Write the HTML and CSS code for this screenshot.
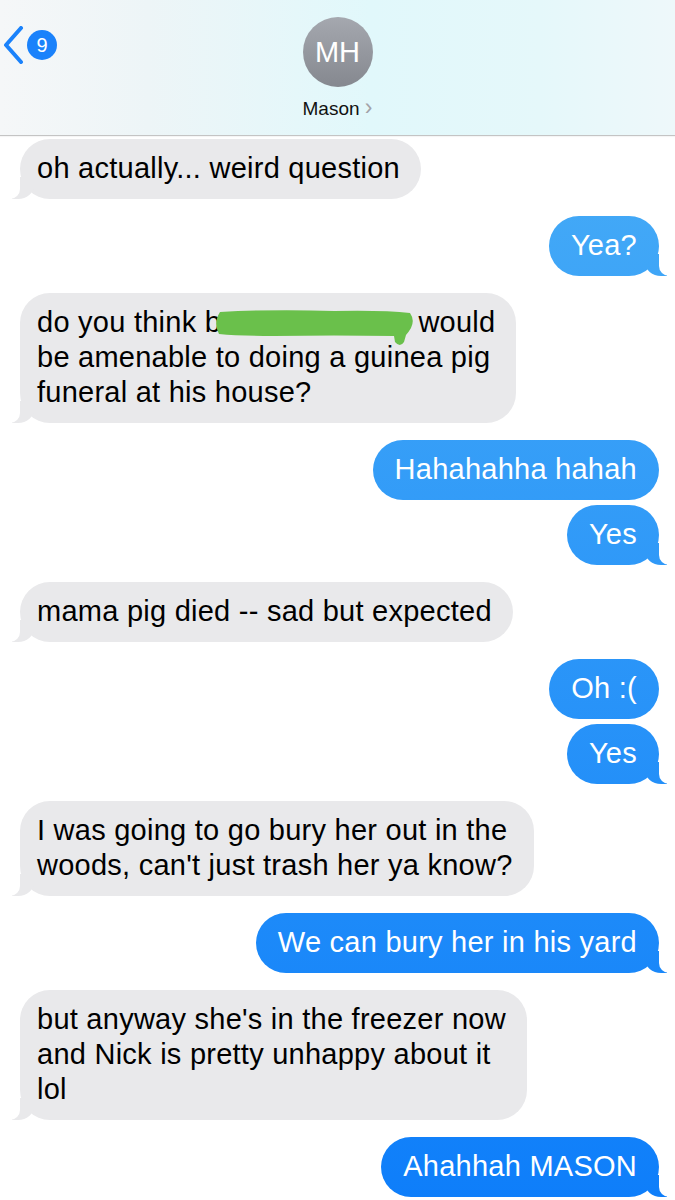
FILE: index.html
```html
<html lang="en">
<head>
    <meta charset="UTF-8">
    <meta name="viewport" content="width=device-width, initial-scale=1.0">
    <title>Mason</title>
    <link rel="stylesheet" href="styles.css">
</head>
<body>
    <div class="header">
        <div class="back">
            <svg class="back-arrow" width="22" height="38" viewBox="0 0 22 38">
                <polyline points="19,2 4,19 19,36" fill="none" stroke="#1a82fb" stroke-width="4" stroke-linecap="round" stroke-linejoin="round"/>
            </svg>
            <div class="badge">9</div>
        </div>
        <div class="contact">
            <div class="avatar">MH</div>
            <div class="contact-name">Mason <span class="name-arrow">&#x203A;</span></div>
        </div>
        <div></div>
    </div>

    <div class="chat-container">
        <div class="bubble them tail">oh actually... weird question</div>

        <div class="bubble me tail new-sender">Yea?</div>

        <div class="bubble them tail new-sender">do you think b<svg class="redact" width="200" height="38" viewBox="0 0 200 38"><path d="M6,3 Q60,0 120,2 Q170,1 196,4 Q201,11 197,19 Q194,24 192,26 L190,33 Q186,39 181,33 L180,27 Q120,26 60,27 Q25,27 5,25 Q-1,14 6,3 Z" fill="#6ac04b"/></svg> would<br>be amenable to doing a guinea pig<br>funeral at his house?</div>

        <div class="bubble me new-sender">Hahahahha hahah</div>
        <div class="bubble me tail">Yes</div>

        <div class="bubble them tail new-sender">mama pig died -- sad but expected</div>

        <div class="bubble me new-sender">Oh :(</div>
        <div class="bubble me tail">Yes</div>

        <div class="bubble them tail new-sender">I was going to go bury her out in the<br>woods, can't just trash her ya know?</div>

        <div class="bubble me tail new-sender">We can bury her in his yard</div>

        <div class="bubble them tail new-sender">but anyway she's in the freezer now<br>and Nick is pretty unhappy about it<br>lol</div>

        <div class="bubble me tail new-sender">Ahahhah MASON</div>
    </div>
</body>
</html>
```

FILE: styles.css
```css
body {
    margin: 0;
    background-color: #fff;
    font-family: "Liberation Sans", Arial, sans-serif;
    overflow: hidden;
}
.header {
    height: 135px;
    display: grid;
    grid-template-columns: 1fr auto 1fr;
    background: linear-gradient(90deg, #f5f7f8 0%, #edf5f7 22%, #e1f8fb 55%, #e5f8fa 80%, #eef8fa 100%);
    border-bottom: 1px solid #c4c4c4;
    box-shadow: 0 1px 1px rgba(0, 0, 0, 0.04);
}
.back {
    display: flex;
    align-items: center;
    gap: 3px;
    padding-left: 2px;
    margin-top: 26px;
    align-self: start;
}
.back-arrow {
    display: block;
}
.badge {
    width: 30px;
    height: 30px;
    border-radius: 50%;
    background-color: #1a82fb;
    color: #fff;
    font-size: 20px;
    display: flex;
    justify-content: center;
    align-items: center;
}
.contact {
    display: flex;
    flex-direction: column;
    align-items: center;
    padding-top: 17px;
}
.avatar {
    width: 70px;
    height: 70px;
    border-radius: 50%;
    background: linear-gradient(#a5a8af, #85888f);
    color: #fff;
    font-size: 29px;
    display: flex;
    justify-content: center;
    align-items: center;
}
.contact-name {
    margin-top: 9px;
    font-size: 19px;
    line-height: 22px;
    color: #111;
}
.name-arrow {
    color: #a3a3a8;
    font-size: 23px;
}
.chat-container {
    display: flex;
    flex-direction: column;
    padding: 3px 16px 0 20px;
}
.bubble {
    position: relative;
    font-size: 29px;
    line-height: 35px;
    letter-spacing: 0.25px;
    padding: 12px 21px 13px 17px;
    border-radius: 30px;
    white-space: nowrap;
    margin-top: 5px;
}
.bubble:first-child {
    margin-top: 0;
}
.bubble.new-sender {
    margin-top: 17px;
}
.them {
    align-self: flex-start;
    background-color: #e9e9eb;
    color: #000;
}
.me {
    align-self: flex-end;
    padding: 12px 22px 13px 22px;
    background: linear-gradient(#4db1f6, #0e7efa) fixed;
    color: #fff;
}
.them.tail::before {
    content: "";
    position: absolute;
    bottom: 0;
    left: -8px;
    width: 22px;
    height: 22px;
    background-color: #e9e9eb;
    border-bottom-right-radius: 16px 14px;
}
.them.tail::after {
    content: "";
    position: absolute;
    bottom: 0;
    left: -12px;
    width: 12px;
    height: 24px;
    background-color: #fff;
    border-bottom-right-radius: 10px;
}
.me.tail::before {
    content: "";
    position: absolute;
    bottom: 0;
    right: -8px;
    width: 22px;
    height: 22px;
    background: linear-gradient(#4db1f6, #0e7efa) fixed;
    border-bottom-left-radius: 16px 14px;
}
.me.tail::after {
    content: "";
    position: absolute;
    bottom: 0;
    right: -12px;
    width: 12px;
    height: 24px;
    background-color: #fff;
    border-bottom-left-radius: 10px;
}
.redact {
    vertical-align: top;
    margin: 4px -4px -10px -7px;
    position: relative;
    z-index: 1;
}
```
